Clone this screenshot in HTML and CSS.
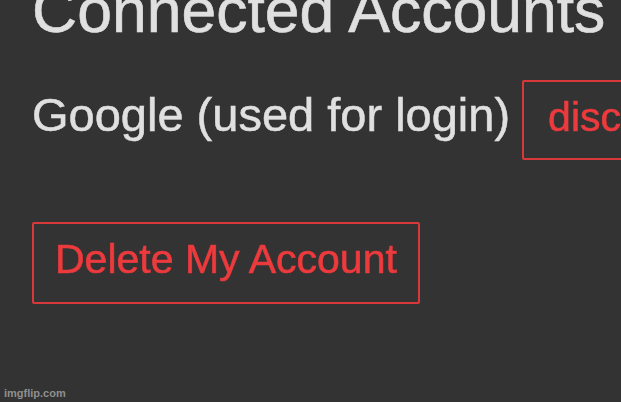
FILE: index.html
```html
<!DOCTYPE html>
<html>
<head>
<meta charset="utf-8">
<link rel="stylesheet" href="styles.css">
</head>
<body>
<main class="page">
  <h2 class="title">Connected Accounts</h2>
  <div class="account-row">
    <span class="account-name">Google (used for login)</span>
    <button class="danger-btn disconnect-btn">disconnect</button>
  </div>
  <button class="danger-btn delete-btn">Delete My Account</button>
</main>
<span class="watermark">imgflip.com</span>
</body>
</html>
```
FILE: styles.css
```css
html, body {
  margin: 0;
  padding: 0;
  background: #333333;
  overflow: hidden;
  height: 100%;
}
body {
  font-family: "Liberation Sans", Arial, sans-serif;
  color: #e0e0e0;
  position: relative;
}
.page {
  display: flex;
  flex-direction: column;
  align-items: flex-start;
  padding: 0 0 0 32px;
  filter: blur(0.4px);
}
.title {
  margin: -21px 0 0 0;
  font-size: 62.5px;
  line-height: 1;
  font-weight: normal;
  white-space: nowrap;
  -webkit-text-stroke: 0.6px #e0e0e0;
}
.account-row {
  display: flex;
  align-items: baseline;
  gap: 12px;
  margin-top: 38px;
  white-space: nowrap;
}
.account-name {
  font-size: 47px;
  line-height: 1.15;
  -webkit-text-stroke: 0.5px #e0e0e0;
}
.danger-btn {
  font-family: "Liberation Sans", Arial, sans-serif;
  font-size: 41px;
  line-height: 1;
  color: #ec3a3d;
  -webkit-text-stroke: 0.6px #ec3a3d;
  background: transparent;
  border: 2px solid #d9383b;
  border-radius: 2px;
  padding: 15px 21px 20px 21px;
  white-space: nowrap;
  cursor: pointer;
}
.disconnect-btn {
  padding-left: 24px;
}
.delete-btn {
  margin-top: 62px;
  padding-bottom: 22px;
}
.watermark {
  position: absolute;
  left: 4px;
  bottom: 3px;
  font-size: 11px;
  font-weight: bold;
  color: #8f8f8f;
  font-family: "Liberation Sans", Arial, sans-serif;
}
```
